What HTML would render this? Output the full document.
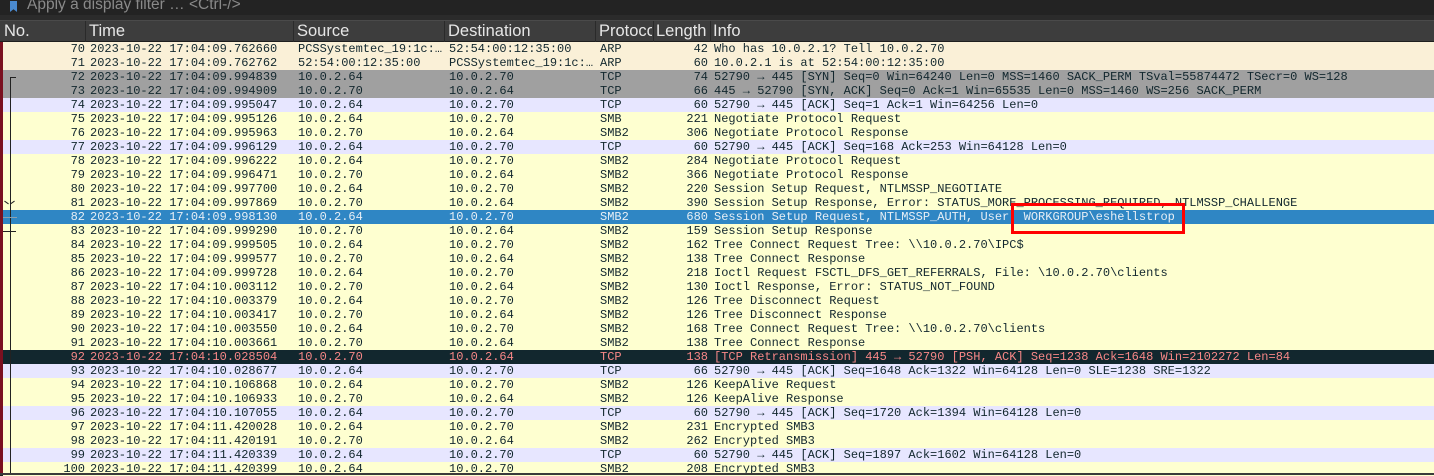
<!DOCTYPE html>
<html><head><meta charset="utf-8"><style>
*{margin:0;padding:0;box-sizing:border-box}
body{width:1434px;height:475px;overflow:hidden;background:#222;position:relative;font-family:"Liberation Mono",monospace;font-size:12px}
.filter{position:absolute;left:0;top:0;width:1434px;height:15px;background:#232323;color:#8a8a8a;font-family:"Liberation Sans",sans-serif;font-size:15.5px;line-height:13px}
.filter span{position:absolute;left:27px;top:-2px}
.bm{position:absolute;left:10px;top:1px;width:7px;height:11px;background:#4a8ad0;clip-path:polygon(0 0,100% 0,100% 100%,50% 75%,0 100%)}
.sep{position:absolute;left:0;top:15px;width:1434px;height:6px;background:#2b2b2b;border-bottom:1px solid #4a4a4a}
.hdr{position:absolute;left:0;top:21px;width:1434px;height:21px;background:#3d3d3d;border-bottom:1px solid #1e1e1e;color:#e6e6e6;font-family:"Liberation Sans",sans-serif;font-size:16.5px}
.hdr div{position:absolute;top:1px;height:20px;white-space:nowrap;overflow:hidden}
.hdr i{position:absolute;top:0;width:1px;height:21px;background:#2a2a2a}
.row{position:absolute;left:3px;width:1431px;height:14px;line-height:14px;color:#12272e;white-space:pre}
.row span{position:absolute;top:0}
.n{right:auto;width:82px;text-align:right;left:0}
.t{left:87px}.s{left:295px;width:146px;overflow:hidden}.d{left:446px;width:146px;overflow:hidden}.p{left:597px}.l{left:650px;width:55px;text-align:right}.i{left:711px}
.arp{background:#faf0d7}.syn{background:#a0a0a0}.tcp{background:#e7e6ff}.smb{background:#feffd0}
.sel{background:#2f86c4;color:#e6eef5}.bad{background:#12272e;color:#f78787}
.lb{position:absolute;left:0;top:42px;width:3px;height:431px;background:#7a1020}
.tree{position:absolute;left:10px;width:1px;background:#222}
.bottom{position:absolute;left:0;top:473px;width:1434px;height:2px;background:#3a3a3a}
.box{position:absolute;left:1011px;top:203px;width:174px;height:31px;border:3px solid #f00}
</style></head><body>
<div class="filter"><div class="bm"></div><span>Apply a display filter … &lt;Ctrl-/&gt;</span></div>
<div class="sep"></div>
<div class="hdr">
<div style="left:4px">No.</div><i style="left:85px"></i>
<div style="left:89px">Time</div><i style="left:293px"></i>
<div style="left:297px">Source</div><i style="left:444px"></i>
<div style="left:448px">Destination</div><i style="left:595px"></i>
<div style="left:599px;width:53px">Protocol</div><i style="left:653px"></i>
<div style="left:656px">Length</div><i style="left:710px"></i>
<div style="left:713px">Info</div>
</div>
<div class="lb"></div>

<div class="row arp" style="top:42px"><span class="n">70</span><span class="t">2023-10-22 17:04:09.762660</span><span class="s">PCSSystemtec_19:1c:…</span><span class="d">52:54:00:12:35:00</span><span class="p">ARP</span><span class="l">42</span><span class="i">Who has 10.0.2.1? Tell 10.0.2.70</span></div>
<div class="row arp" style="top:56px"><span class="n">71</span><span class="t">2023-10-22 17:04:09.762762</span><span class="s">52:54:00:12:35:00</span><span class="d">PCSSystemtec_19:1c:…</span><span class="p">ARP</span><span class="l">60</span><span class="i">10.0.2.1 is at 52:54:00:12:35:00</span></div>
<div class="row syn" style="top:70px"><span class="n">72</span><span class="t">2023-10-22 17:04:09.994839</span><span class="s">10.0.2.64</span><span class="d">10.0.2.70</span><span class="p">TCP</span><span class="l">74</span><span class="i">52790 → 445 [SYN] Seq=0 Win=64240 Len=0 MSS=1460 SACK_PERM TSval=55874472 TSecr=0 WS=128</span></div>
<div class="row syn" style="top:84px"><span class="n">73</span><span class="t">2023-10-22 17:04:09.994909</span><span class="s">10.0.2.70</span><span class="d">10.0.2.64</span><span class="p">TCP</span><span class="l">66</span><span class="i">445 → 52790 [SYN, ACK] Seq=0 Ack=1 Win=65535 Len=0 MSS=1460 WS=256 SACK_PERM</span></div>
<div class="row tcp" style="top:98px"><span class="n">74</span><span class="t">2023-10-22 17:04:09.995047</span><span class="s">10.0.2.64</span><span class="d">10.0.2.70</span><span class="p">TCP</span><span class="l">60</span><span class="i">52790 → 445 [ACK] Seq=1 Ack=1 Win=64256 Len=0</span></div>
<div class="row smb" style="top:112px"><span class="n">75</span><span class="t">2023-10-22 17:04:09.995126</span><span class="s">10.0.2.64</span><span class="d">10.0.2.70</span><span class="p">SMB</span><span class="l">221</span><span class="i">Negotiate Protocol Request</span></div>
<div class="row smb" style="top:126px"><span class="n">76</span><span class="t">2023-10-22 17:04:09.995963</span><span class="s">10.0.2.70</span><span class="d">10.0.2.64</span><span class="p">SMB2</span><span class="l">306</span><span class="i">Negotiate Protocol Response</span></div>
<div class="row tcp" style="top:140px"><span class="n">77</span><span class="t">2023-10-22 17:04:09.996129</span><span class="s">10.0.2.64</span><span class="d">10.0.2.70</span><span class="p">TCP</span><span class="l">60</span><span class="i">52790 → 445 [ACK] Seq=168 Ack=253 Win=64128 Len=0</span></div>
<div class="row smb" style="top:154px"><span class="n">78</span><span class="t">2023-10-22 17:04:09.996222</span><span class="s">10.0.2.64</span><span class="d">10.0.2.70</span><span class="p">SMB2</span><span class="l">284</span><span class="i">Negotiate Protocol Request</span></div>
<div class="row smb" style="top:168px"><span class="n">79</span><span class="t">2023-10-22 17:04:09.996471</span><span class="s">10.0.2.70</span><span class="d">10.0.2.64</span><span class="p">SMB2</span><span class="l">366</span><span class="i">Negotiate Protocol Response</span></div>
<div class="row smb" style="top:182px"><span class="n">80</span><span class="t">2023-10-22 17:04:09.997700</span><span class="s">10.0.2.64</span><span class="d">10.0.2.70</span><span class="p">SMB2</span><span class="l">220</span><span class="i">Session Setup Request, NTLMSSP_NEGOTIATE</span></div>
<div class="row smb" style="top:196px"><span class="n">81</span><span class="t">2023-10-22 17:04:09.997869</span><span class="s">10.0.2.70</span><span class="d">10.0.2.64</span><span class="p">SMB2</span><span class="l">390</span><span class="i">Session Setup Response, Error: STATUS_MORE_PROCESSING_REQUIRED, NTLMSSP_CHALLENGE</span></div>
<div class="row sel" style="top:210px"><span class="n">82</span><span class="t">2023-10-22 17:04:09.998130</span><span class="s">10.0.2.64</span><span class="d">10.0.2.70</span><span class="p">SMB2</span><span class="l">680</span><span class="i">Session Setup Request, NTLMSSP_AUTH, User: WORKGROUP\eshellstrop</span></div>
<div class="row smb" style="top:224px"><span class="n">83</span><span class="t">2023-10-22 17:04:09.999290</span><span class="s">10.0.2.70</span><span class="d">10.0.2.64</span><span class="p">SMB2</span><span class="l">159</span><span class="i">Session Setup Response</span></div>
<div class="row smb" style="top:238px"><span class="n">84</span><span class="t">2023-10-22 17:04:09.999505</span><span class="s">10.0.2.64</span><span class="d">10.0.2.70</span><span class="p">SMB2</span><span class="l">162</span><span class="i">Tree Connect Request Tree: \\10.0.2.70\IPC$</span></div>
<div class="row smb" style="top:252px"><span class="n">85</span><span class="t">2023-10-22 17:04:09.999577</span><span class="s">10.0.2.70</span><span class="d">10.0.2.64</span><span class="p">SMB2</span><span class="l">138</span><span class="i">Tree Connect Response</span></div>
<div class="row smb" style="top:266px"><span class="n">86</span><span class="t">2023-10-22 17:04:09.999728</span><span class="s">10.0.2.64</span><span class="d">10.0.2.70</span><span class="p">SMB2</span><span class="l">218</span><span class="i">Ioctl Request FSCTL_DFS_GET_REFERRALS, File: \10.0.2.70\clients</span></div>
<div class="row smb" style="top:280px"><span class="n">87</span><span class="t">2023-10-22 17:04:10.003112</span><span class="s">10.0.2.70</span><span class="d">10.0.2.64</span><span class="p">SMB2</span><span class="l">130</span><span class="i">Ioctl Response, Error: STATUS_NOT_FOUND</span></div>
<div class="row smb" style="top:294px"><span class="n">88</span><span class="t">2023-10-22 17:04:10.003379</span><span class="s">10.0.2.64</span><span class="d">10.0.2.70</span><span class="p">SMB2</span><span class="l">126</span><span class="i">Tree Disconnect Request</span></div>
<div class="row smb" style="top:308px"><span class="n">89</span><span class="t">2023-10-22 17:04:10.003417</span><span class="s">10.0.2.70</span><span class="d">10.0.2.64</span><span class="p">SMB2</span><span class="l">126</span><span class="i">Tree Disconnect Response</span></div>
<div class="row smb" style="top:322px"><span class="n">90</span><span class="t">2023-10-22 17:04:10.003550</span><span class="s">10.0.2.64</span><span class="d">10.0.2.70</span><span class="p">SMB2</span><span class="l">168</span><span class="i">Tree Connect Request Tree: \\10.0.2.70\clients</span></div>
<div class="row smb" style="top:336px"><span class="n">91</span><span class="t">2023-10-22 17:04:10.003661</span><span class="s">10.0.2.70</span><span class="d">10.0.2.64</span><span class="p">SMB2</span><span class="l">138</span><span class="i">Tree Connect Response</span></div>
<div class="row bad" style="top:350px"><span class="n">92</span><span class="t">2023-10-22 17:04:10.028504</span><span class="s">10.0.2.70</span><span class="d">10.0.2.64</span><span class="p">TCP</span><span class="l">138</span><span class="i">[TCP Retransmission] 445 → 52790 [PSH, ACK] Seq=1238 Ack=1648 Win=2102272 Len=84</span></div>
<div class="row tcp" style="top:364px"><span class="n">93</span><span class="t">2023-10-22 17:04:10.028677</span><span class="s">10.0.2.64</span><span class="d">10.0.2.70</span><span class="p">TCP</span><span class="l">66</span><span class="i">52790 → 445 [ACK] Seq=1648 Ack=1322 Win=64128 Len=0 SLE=1238 SRE=1322</span></div>
<div class="row smb" style="top:378px"><span class="n">94</span><span class="t">2023-10-22 17:04:10.106868</span><span class="s">10.0.2.64</span><span class="d">10.0.2.70</span><span class="p">SMB2</span><span class="l">126</span><span class="i">KeepAlive Request</span></div>
<div class="row smb" style="top:392px"><span class="n">95</span><span class="t">2023-10-22 17:04:10.106933</span><span class="s">10.0.2.70</span><span class="d">10.0.2.64</span><span class="p">SMB2</span><span class="l">126</span><span class="i">KeepAlive Response</span></div>
<div class="row tcp" style="top:406px"><span class="n">96</span><span class="t">2023-10-22 17:04:10.107055</span><span class="s">10.0.2.64</span><span class="d">10.0.2.70</span><span class="p">TCP</span><span class="l">60</span><span class="i">52790 → 445 [ACK] Seq=1720 Ack=1394 Win=64128 Len=0</span></div>
<div class="row smb" style="top:420px"><span class="n">97</span><span class="t">2023-10-22 17:04:11.420028</span><span class="s">10.0.2.64</span><span class="d">10.0.2.70</span><span class="p">SMB2</span><span class="l">231</span><span class="i">Encrypted SMB3</span></div>
<div class="row smb" style="top:434px"><span class="n">98</span><span class="t">2023-10-22 17:04:11.420191</span><span class="s">10.0.2.70</span><span class="d">10.0.2.64</span><span class="p">SMB2</span><span class="l">262</span><span class="i">Encrypted SMB3</span></div>
<div class="row tcp" style="top:448px"><span class="n">99</span><span class="t">2023-10-22 17:04:11.420339</span><span class="s">10.0.2.64</span><span class="d">10.0.2.70</span><span class="p">TCP</span><span class="l">60</span><span class="i">52790 → 445 [ACK] Seq=1897 Ack=1602 Win=64128 Len=0</span></div>
<div class="row smb" style="top:462px"><span class="n">100</span><span class="t">2023-10-22 17:04:11.420399</span><span class="s">10.0.2.64</span><span class="d">10.0.2.70</span><span class="p">SMB2</span><span class="l">208</span><span class="i">Encrypted SMB3</span></div>

<div class="tree" style="top:77px;height:396px"></div>
<div style="position:absolute;left:10px;top:77px;width:6px;height:1px;background:#222"></div>
<div style="position:absolute;left:4px;top:202px;width:5px;height:1px;background:#222;transform:rotate(35deg)"></div>
<div style="position:absolute;left:10px;top:202px;width:5px;height:1px;background:#222;transform:rotate(-35deg)"></div>
<div style="position:absolute;left:3px;top:217px;width:14px;height:1px;background:#8aa0b0"></div>
<div style="position:absolute;left:3px;top:231px;width:13px;height:1px;background:#222"></div>
<div class="bottom"></div>
<div class="box"></div>
</body></html>
